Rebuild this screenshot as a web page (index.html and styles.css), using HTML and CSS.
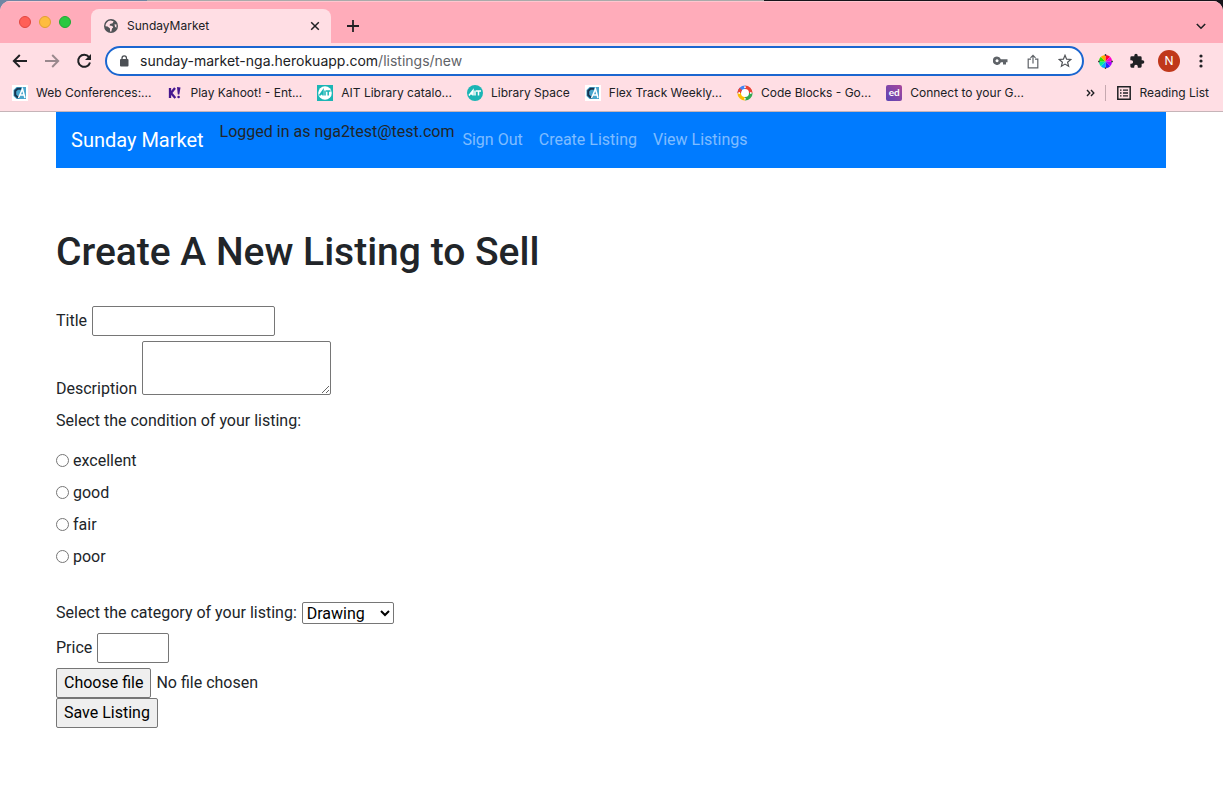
FILE: index.html
```html
<!DOCTYPE html>
<html lang="en">
<head>
<meta charset="utf-8">
<meta name="viewport" content="width=device-width, initial-scale=1">
<title>SundayMarket</title>
<link rel="stylesheet" href="styles.css">
</head>
<body>
<div class="desktop">
<div class="browser">
  <div class="tabstrip">
    <div class="lights">
      <button class="light light-close" aria-label="Close window"></button>
      <button class="light light-min" aria-label="Minimise window"></button>
      <button class="light light-max" aria-label="Zoom window"></button>
    </div>
    <div class="tab">
      <svg width="14" height="14" viewBox="0 0 14 14"><circle cx="7" cy="7" r="7" fill="#505357"/><path d="M6.500 1.600 9.600 2.200 8.600 4.200 6 5 5.600 6.600 8.400 7 9.200 8.400 8 9.600 7.400 12.400 6 12.400 6 9.600 3.600 7.600 1.500 7.200C1.500 4.500 3.600 1.900 6.500 1.600M10.500 5.200 12.500 5.600 12.400 8.800 11 7.800z" fill="#ffdee4"/></svg>
      <span class="tab-title">SundayMarket</span>
      <button class="icon-btn" aria-label="Close tab"><svg width="10" height="10" viewBox="0 0 10 10"><path d="M1.200 1.200 8.800 8.800M8.800 1.200 1.200 8.800" stroke="#202124" stroke-width="1.500"/></svg></button>
    </div>
    <button class="icon-btn new-tab" aria-label="New tab"><svg width="12" height="12" viewBox="0 0 12 12"><path d="M6 0V12M0 6H12" stroke="#202124" stroke-width="1.800"/></svg></button>
    <button class="icon-btn tab-search" aria-label="Search tabs"><svg width="10" height="7" viewBox="0 0 10 7"><path d="M.8 1 5 5.200 9.200 1" fill="none" stroke="#202124" stroke-width="1.600"/></svg></button>
  </div>
  <div class="toolbar">
    <div class="history">
      <button class="icon-btn" aria-label="Back"><svg width="16" height="14" viewBox="0 0 16 14"><path d="M15 7H2.200M7.800 1 1.800 7 7.800 13" fill="none" stroke="#202124" stroke-width="1.900"/></svg></button>
      <button class="icon-btn faded" aria-label="Forward"><svg width="16" height="14" viewBox="0 0 16 14"><path d="M1 7H13.800M8.200 1 14.200 7 8.200 13" fill="none" stroke="#202124" stroke-width="1.900"/></svg></button>
      <button class="icon-btn" aria-label="Reload"><svg width="16" height="16" viewBox="0 0 16 16"><path d="M13 4.200A6 6 0 1 0 14 9.400" fill="none" stroke="#202124" stroke-width="2"/><path d="M15 1V7H9z" fill="#202124"/></svg></button>
    </div>
    <div class="omnibox">
      <svg width="10" height="12" viewBox="0 0 10 12"><rect x="1" y="4" width="8.500" height="7.500" rx="1" fill="#4b4f54"/><path d="M3 5V3.200a2.250 2.250 0 0 1 4.500 0V5" fill="none" stroke="#4b4f54" stroke-width="1.300"/></svg>
      <span class="url"><b>sunday-market-nga.herokuapp.com</b>/listings/new</span>
      <button class="icon-btn" aria-label="Passwords"><svg width="15" height="10" viewBox="0 0 15 10"><path fill-rule="evenodd" d="M4 .5a4.200 4.200 0 0 1 3.900 2.700H14.500V6.300H13V8.500H10V6.300H7.900A4.200 4.200 0 1 1 4 .5M4 3.200a1.500 1.500 0 1 0 .1 0z" fill="#5f6368"/></svg></button>
      <button class="icon-btn" aria-label="Share"><svg width="12" height="15" viewBox="0 0 12 15"><path d="M4 5.200H1.200V13.800H10.800V5.200H8M6 9.500V1.600M3.500 3.800 6 1.300 8.500 3.800" fill="none" stroke="#5f6368" stroke-width="1.200"/></svg></button>
      <button class="icon-btn" aria-label="Bookmark this page"><svg width="14" height="14" viewBox="0 0 14 14"><path d="M7 1.300 8.600 5.200 12.800 5.500 9.600 8.200 10.600 12.300 7 10.100 3.400 12.300 4.400 8.200 1.200 5.500 5.400 5.200z" fill="none" stroke="#505357" stroke-width="1.200"/></svg></button>
    </div>
    <div class="extensions">
      <button class="icon-btn" aria-label="Colour picker"><svg width="15" height="15" viewBox="0 0 16 16"><path d="M8 8V1A7 7 0 0 1 13 3z" fill="#f03"/><path d="M8 8 13 3A7 7 0 0 1 15 8z" fill="#f0c"/><path d="M8 8H15A7 7 0 0 1 13 13z" fill="#a0f"/><path d="M8 8 13 13A7 7 0 0 1 8 15z" fill="#22f"/><path d="M8 8V15A7 7 0 0 1 3 13z" fill="#0af"/><path d="M8 8 3 13A7 7 0 0 1 1 8z" fill="#0e9"/><path d="M8 8H1A7 7 0 0 1 3 3z" fill="#3d0"/><path d="M8 8 3 3A7 7 0 0 1 8 1z" fill="#fa0"/><path d="M8 0V2M8 14V16M0 8H2M14 8H16" stroke="#444" stroke-width="1.500"/></svg></button>
      <button class="icon-btn" aria-label="Extensions"><svg width="16" height="16" viewBox="0 0 24 24"><path d="M20.500 11H19V7a2 2 0 0 0-2-2h-4V3.500a2.500 2.500 0 0 0-5 0V5H4a2 2 0 0 0-2 2v3.800h1.500a2.700 2.700 0 0 1 0 5.400H2V20a2 2 0 0 0 2 2h3.800v-1.500a2.700 2.700 0 0 1 5.400 0V22H17a2 2 0 0 0 2-2v-4h1.500a2.500 2.500 0 0 0 0-5" fill="#202124"/></svg></button>
      <button class="avatar" aria-label="Profile">N</button>
      <button class="icon-btn" aria-label="Menu"><svg width="4" height="14" viewBox="0 0 4 14"><g fill="#202124"><circle cx="2" cy="2" r="1.600"/><circle cx="2" cy="7" r="1.600"/><circle cx="2" cy="12" r="1.600"/></g></svg></button>
    </div>
  </div>
  <div class="bookmarks">
    <a class="bookmark" href="#"><svg width="16" height="16" viewBox="0 0 16 16"><path d="M0 0H16V16H0z" fill="#fff"/><path d="M4.500 2H14V14H4.500L1.500 11V5z" fill="#49a5cc"/><path d="M9 3.800H5.500L3.200 6V10L5.500 12.200H7.500" fill="none" stroke="#173450" stroke-width="2"/><path d="M6.500 13 10.500 4 13 13M8.500 10H12" fill="none" stroke="#fff" stroke-width="1.500"/></svg><span>Web Conferences:...</span></a>
    <a class="bookmark" href="#"><svg width="16" height="16" viewBox="0 0 16 16"><path d="M3 3V13M8 3 4 8 8.300 13" fill="none" stroke="#46178f" stroke-width="2.300"/><path d="M10 2 13.500 2.500 12.300 9.500H10.800z" fill="#46178f"/><circle cx="11.600" cy="12" r="1.300" fill="#46178f"/></svg><span>Play Kahoot! - Ent...</span></a>
    <a class="bookmark" href="#"><svg width="16" height="16" viewBox="0 0 16 16"><path d="M0 0H16V16H0z" fill="#1bb5b5"/><circle cx="8" cy="8" r="6.800" fill="#fff"/><path d="M2.500 10.500 6 5.500V10.500M4 9H6M8 5.500V10.500M9 6H13.500M11.200 6V10.500" fill="none" stroke="#1bb5b5" stroke-width="1.500"/></svg><span>AIT Library catalo...</span></a>
    <a class="bookmark" href="#"><svg width="16" height="16" viewBox="0 0 16 16"><circle cx="8" cy="8" r="8" fill="#1bb5b5"/><path d="M2 10.500 6 5.500V10.500M4 9H6M8 5.500V10.500M9 6H14M11.500 6V10.500" fill="none" stroke="#fff" stroke-width="1.500"/></svg><span>Library Space</span></a>
    <a class="bookmark" href="#"><svg width="16" height="16" viewBox="0 0 16 16"><path d="M0 0H16V16H0z" fill="#fff"/><path d="M4.500 2H14V14H4.500L1.500 11V5z" fill="#49a5cc"/><path d="M9 3.800H5.500L3.200 6V10L5.500 12.200H7.500" fill="none" stroke="#173450" stroke-width="2"/><path d="M6.500 13 10.500 4 13 13M8.500 10H12" fill="none" stroke="#fff" stroke-width="1.500"/></svg><span>Flex Track Weekly...</span></a>
    <a class="bookmark" href="#"><svg width="16" height="16" viewBox="0 0 16 16"><circle cx="8" cy="8" r="5" fill="#fff"/><g fill="none" stroke-width="3.600"><path d="M2.200 8A5.800 5.800 0 0 1 8 2.200" stroke="#4285f4"/><path d="M8 2.200A5.800 5.800 0 0 1 13.800 8" stroke="#ea4335"/><path d="M13.800 8A5.800 5.800 0 0 1 8 13.800" stroke="#34a853"/><path d="M8 13.800A5.800 5.800 0 0 1 2.200 8" stroke="#fbbc04"/><path d="M2.200 8A5.800 5.800 0 0 1 3.900 3.900" stroke="#ea4335"/></g><g fill="#fff"><circle cx="8" cy="2.200" r=".9"/><circle cx="13.800" cy="8" r=".9"/><circle cx="8" cy="13.800" r=".9"/><circle cx="2.200" cy="8" r=".9"/></g></svg><span>Code Blocks - Go...</span></a>
    <a class="bookmark" href="#"><i class="ed">ed</i><span>Connect to your G...</span></a>
    <div class="bookmarks-end">
      <button class="icon-btn" aria-label="More bookmarks"><svg width="9" height="8" viewBox="0 0 9 8"><path d="M1 1 3.800 4 1 7M5 1 7.800 4 5 7" fill="none" stroke="#202124" stroke-width="1.400"/></svg></button>
      <a class="reading" href="#"><svg width="14" height="14" viewBox="0 0 14 14"><path d="M.8.8H13.200V13.200H.8z" fill="none" stroke="#202124" stroke-width="1.500"/><path d="M3 4.200H4.500M6 4.200H11M3 7H4.500M6 7H11M3 9.800H4.500M6 9.800H11" stroke="#202124" stroke-width="1.300"/></svg><span>Reading List</span></a>
    </div>
  </div>
</div>
</div>

<main class="container">
  <nav class="navbar">
    <a class="brand" href="#">Sunday Market</a>
    <span class="who">Logged in as nga2test@test.com</span>
    <a class="nav-link" href="#">Sign Out</a>
    <a class="nav-link" href="#">Create Listing</a>
    <a class="nav-link" href="#">View Listings</a>
  </nav>
  <h1>Create A New Listing to Sell</h1>
  <form class="listing-form">
    <div class="row"><label for="title">Title</label><input class="field field-title" id="title" type="text"></div>
    <div class="row row-description"><label for="description">Description</label><textarea class="field field-description" id="description"></textarea></div>
    <fieldset class="conditions">
      <legend>Select the condition of your listing:</legend>
      <label class="option"><input type="radio" name="condition">excellent</label>
      <label class="option"><input type="radio" name="condition">good</label>
      <label class="option"><input type="radio" name="condition">fair</label>
      <label class="option"><input type="radio" name="condition">poor</label>
    </fieldset>
    <div class="row row-category"><label for="category">Select the category of your listing:</label><select id="category"><option>Drawing</option><option>Photography</option></select></div>
    <div class="row"><label for="price">Price</label><input class="field field-price" id="price" type="text"></div>
    <div class="row row-file"><input class="file-input" id="picture" type="file"><label class="push" for="picture">Choose file</label><span>No file chosen</span></div>
    <button class="push" type="submit">Save Listing</button>
  </form>
</main>
</body>
</html>
```
FILE: styles.css
```css
* { box-sizing: border-box; }
body {
  margin: 0;
  background: #fff;
  color: #212529;
  font: 16px/24px Roboto, "Liberation Sans", sans-serif;
}
a { text-decoration: none; }
button, input, select, textarea { font: inherit; }
svg { display: block; flex: none; }

/* Browser window */
.desktop {
  padding-top: 1px;
  background: linear-gradient(90deg, #6f86a3 12%, #aaa 12%, #aaa 62.5%, #17141a 62.5%);
}
.browser {
  border-radius: 10px 10px 0 0;
  border-bottom: 1px solid #c6b4b8;
  background: #ffdee4;
  color: #202124;
  font-family: Inter, "Liberation Sans", sans-serif;
  font-size: 12px;
  line-height: 16px;
  overflow: hidden;
}
.icon-btn {
  display: flex;
  align-items: center;
  justify-content: center;
  padding: 0;
  border: 0;
  background: none;
}
.tabstrip {
  display: flex;
  align-items: flex-end;
  height: 42px;
  padding: 0 17px 0 19px;
  border-top: 1px solid #ffc6cf;
  background: #ffacba;
}
.lights { display: flex; gap: 8px; padding-bottom: 15px; }
.light {
  width: 12px;
  height: 12px;
  padding: 0;
  border: 1px solid #e2463f;
  border-radius: 50%;
  background: #ff5f57;
}
.light-min { border-color: #e1a030; background: #febc40; }
.light-max { border-color: #1fa834; background: #2bc840; }
.tab {
  display: flex;
  align-items: center;
  gap: 9px;
  width: 240px;
  height: 34px;
  margin-left: 20px;
  padding: 0 11px 0 13px;
  border-radius: 8px 8px 0 0;
  background: #ffdee4;
}
.tab-title { flex: 1; }
.new-tab { height: 34px; margin-left: 16px; }
.tab-search { height: 34px; margin-left: auto; }
.toolbar {
  display: flex;
  align-items: center;
  height: 36px;
  padding: 0 6px 0 12px;
}
.history { display: flex; gap: 16px; width: 93px; }
.faded { opacity: 0.45; }
.omnibox {
  display: flex;
  flex: 1;
  align-items: center;
  gap: 19px;
  height: 30px;
  padding: 0 10px 0 12px;
  border: 2px solid #1b66d0;
  border-radius: 15px;
  background: #fff;
  font-size: 14px;
}
.url { flex: 1; margin-left: -8px; color: #5f6368; }
.url b { color: #202124; font-weight: 400; }
.extensions {
  display: grid;
  grid-template-columns: repeat(4, 32px);
  align-items: center;
  justify-items: center;
  margin-left: 5px;
}
.avatar {
  width: 22px;
  height: 22px;
  padding: 0;
  border: 0;
  border-radius: 50%;
  background: #c0381b;
  color: #fff;
  font-size: 12px;
  line-height: 22px;
}
.bookmarks {
  display: flex;
  align-items: center;
  gap: 15px;
  height: 32px;
  padding: 0 14px 4px 12px;
  white-space: nowrap;
}
.bookmark, .reading { display: flex; align-items: center; gap: 8px; color: #202124; }
.ed {
  width: 16px;
  height: 16px;
  border-radius: 2px;
  background: linear-gradient(45deg, #5a45b5, #a8479c);
  color: #fff;
  font: bold 10px/15px Lato, sans-serif;
  text-align: center;
}
.bookmarks-end { display: flex; align-items: center; gap: 10px; margin-left: auto; }
.reading { gap: 9px; padding-left: 11px; border-left: 1px solid #c6a9b0; }

/* Page */
.container { max-width: 1141px; margin: 0 auto; padding: 0 16px 0 15px; }
.navbar {
  display: flex;
  align-items: center;
  min-height: 56px;
  padding: 8px 15px;
  background: #007bff;
}
.brand { margin-right: 16px; color: #fff; font-size: 20px; line-height: 30px; }
.who { align-self: flex-start; }
.nav-link { padding: 8px; color: rgba(255, 255, 255, 0.5); }
h1 { margin: 60px 0 30px; font-size: 39px; font-weight: 500; line-height: 48px; }
.row { display: flex; align-items: center; gap: 5px; margin-bottom: 5px; }
.field {
  height: 30px;
  padding: 1px 2px;
  border: 1px solid #767676;
  border-radius: 2px;
  background: #fff;
}
.field-title { width: 183px; }
.row-description { align-items: flex-start; margin-bottom: 8px; }
.row-description label { padding-top: 36px; }
.field-description { width: 189px; height: 54px; }
.field-price { width: 72px; }
.conditions { margin: 0 0 32px; padding: 0; border: 0; }
.conditions legend { margin-bottom: 16px; padding: 0; }
.option { display: flex; align-items: center; gap: 4px; margin-bottom: 8px; }
.option:last-child { margin-bottom: 0; }
.option input { width: 13px; height: 13px; margin: 0 0 2px; }
.row-category { margin-bottom: 8px; }
select {
  width: 92px;
  height: 22px;
  padding: 0;
  border: 1px solid #767676;
  border-radius: 2px;
  background: #fff;
  color: #000;
}
.push {
  display: block;
  padding: 2px 7px;
  border: 1px solid #767676;
  border-radius: 2px;
  background: #efefef;
  color: #000;
}
.row-file { margin-bottom: 0; }
.file-input { position: absolute; width: 1px; height: 1px; opacity: 0; }
.file-input:focus-visible + .push { outline: 2px solid #1b66d0; }
```
